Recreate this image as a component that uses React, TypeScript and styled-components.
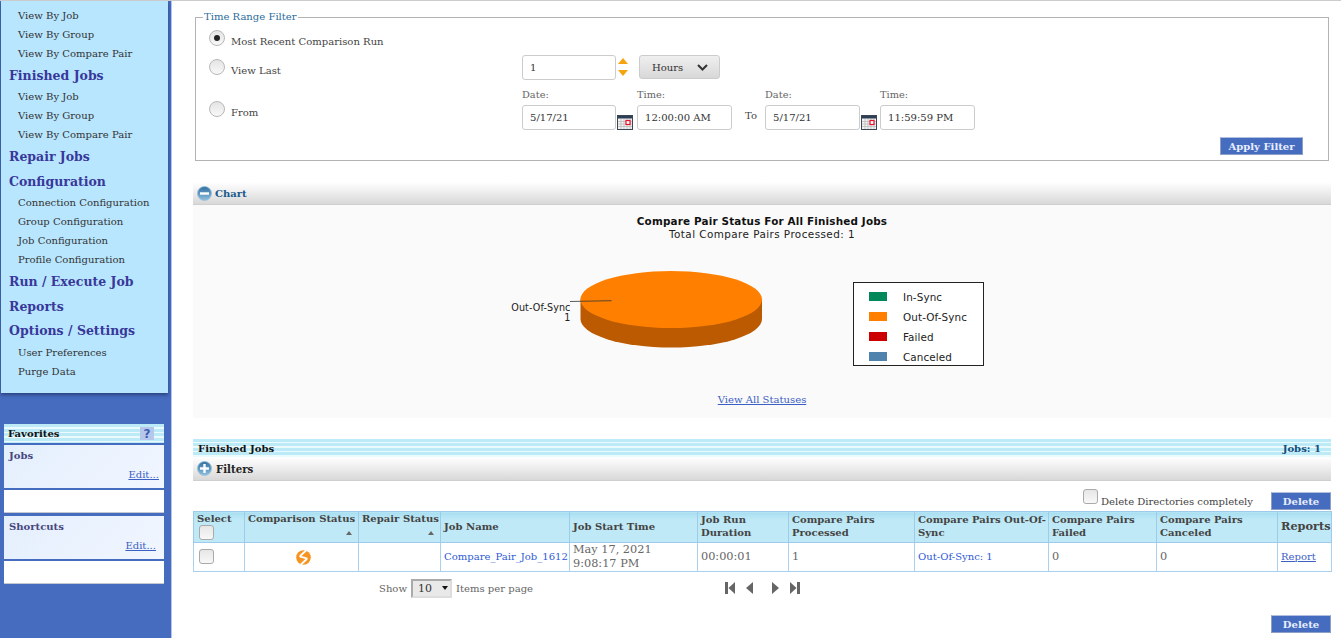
import React from 'react';
import styled, { createGlobalStyle, css } from 'styled-components';

const GlobalStyle = createGlobalStyle`
  html, body {
    margin: 0;
    padding: 0;
    background: #fff;
    overflow: hidden;
  }
  body {
    font-family: "DejaVu Serif", "Liberation Serif", serif;
    font-size: 10.05px;
    color: #444;
  }
  * {
    box-sizing: border-box;
  }
`;

const stripes = css`
  background: repeating-linear-gradient(to bottom, #bdeaf7 0, #bdeaf7 3px, #eafafd 3px, #eafafd 4.5px);
`;

const navEntries: { label: string; heading?: boolean }[] = [
  { label: 'View By Job' },
  { label: 'View By Group' },
  { label: 'View By Compare Pair' },
  { label: 'Finished Jobs', heading: true },
  { label: 'View By Job' },
  { label: 'View By Group' },
  { label: 'View By Compare Pair' },
  { label: 'Repair Jobs', heading: true },
  { label: 'Configuration', heading: true },
  { label: 'Connection Configuration' },
  { label: 'Group Configuration' },
  { label: 'Job Configuration' },
  { label: 'Profile Configuration' },
  { label: 'Run / Execute Job', heading: true },
  { label: 'Reports', heading: true },
  { label: 'Options / Settings', heading: true },
  { label: 'User Preferences' },
  { label: 'Purge Data' },
];

const columnWidths = [51, 114, 82, 129, 128, 91, 126, 134, 108, 121, 54];

const MinusPlusIcon: React.FC<{ plus?: boolean }> = ({ plus }) => (
  <svg width="15" height="15" viewBox="0 0 15 15">
    <defs>
      <linearGradient id={plus ? 'plusFill' : 'minusFill'} x1="0" y1="0" x2="0" y2="1">
        <stop offset="0" stopColor="#2f6f9f" />
        <stop offset="1" stopColor="#8fc0e0" />
      </linearGradient>
    </defs>
    <circle cx="7.5" cy="7.5" r="7" fill={`url(#${plus ? 'plusFill' : 'minusFill'})`} stroke="#9cc0d8" strokeWidth="0.8" />
    <rect x="3" y="6.3" width="9" height="2.4" fill="#fff" />
    {plus && <rect x="6.3" y="3" width="2.4" height="9" fill="#fff" />}
  </svg>
);

const CalendarIcon: React.FC = () => (
  <svg width="16" height="15" viewBox="0 0 16 15">
    <rect x="0" y="0" width="16" height="15" fill="#f2f2f2" />
    <rect x="0" y="0" width="16" height="3.5" fill="#2d3f55" />
    <path d="M0 .5H16M.5 0V15M15.5 0V15M0 14.5H16" stroke="#3b4656" strokeWidth="1" fill="none" />
    <path d="M4 4V14M7 4V14M10 4V14M13 4V14M1 6.5H15M1 9H15M1 11.5H15" stroke="#b5b5b5" strokeWidth="0.7" />
    <rect x="9" y="5.5" width="4" height="4" fill="#fff" stroke="#e8102a" strokeWidth="1.2" />
  </svg>
);

const StatusIcon: React.FC = () => (
  <svg width="15" height="15" viewBox="0 0 15 15">
    <circle cx="7.5" cy="7.5" r="7.3" fill="#f7931e" />
    <path d="M10 0.5L4.6 5.6Q3.9 6.5 5 6.9L10 8.1Q11.1 8.5 10.4 9.4L5 14.5" fill="none" stroke="#fff" strokeWidth="2" />
  </svg>
);

const PagerIcon: React.FC<{ kind: 'first' | 'prev' | 'next' | 'last' }> = ({ kind }) => {
  const shapes = {
    first: <path d="M0 1H3V13H0ZM10 1V13L3.5 7Z" />,
    prev: <path d="M7 1V13L0 7Z" />,
    next: <path d="M0 1V13L7 7Z" />,
    last: <path d="M7 1H10V13H7ZM0 1V13L6.5 7Z" />,
  };
  const wide = kind === 'first' || kind === 'last';
  return (
    <svg width={wide ? 10 : 7} height="14" viewBox={`0 0 ${wide ? 10 : 7} 14`} fill="#666">
      {shapes[kind]}
    </svg>
  );
};

const PieChart: React.FC = () => (
  <ChartSvg viewBox="442 212 640 170">
    <g fontFamily="'DejaVu Sans', sans-serif" fontSize="10.4" fill="#222" letterSpacing="0.1">
      <text x="762" y="225" textAnchor="middle" fontWeight="bold" fontSize="10.4" letterSpacing="0.17" fill="#111">
        Compare Pair Status For All Finished Jobs
      </text>
      <text x="762" y="238" textAnchor="middle" letterSpacing="0.44">Total Compare Pairs Processed: 1</text>
      <path d="M580.5 299.5V319A90.7 28.5 0 0 0 762 319V299.5Z" fill="#bb5a00" />
      <ellipse cx="671.2" cy="299.5" rx="90.8" ry="28.5" fill="#ff8000" />
      <path d="M570 301.5L611.5 300.7" stroke="#333" strokeWidth="0.8" fill="none" />
      <text x="570.5" y="311" textAnchor="end" fontSize="9.6">Out-Of-Sync</text>
      <text x="570.5" y="321" textAnchor="end" fontSize="9.6">1</text>
      <rect x="853.5" y="282.5" width="130" height="83" fill="#fff" stroke="#222" />
      <rect x="869" y="292" width="18" height="9" fill="#00875a" />
      <rect x="869" y="312" width="18" height="9" fill="#ff8000" />
      <rect x="869" y="332" width="18" height="9" fill="#cc0000" />
      <rect x="869" y="352" width="18" height="9" fill="#4f82ad" />
      <text x="903" y="301">In-Sync</text>
      <text x="903" y="321">Out-Of-Sync</text>
      <text x="903" y="341">Failed</text>
      <text x="903" y="361">Canceled</text>
    </g>
  </ChartSvg>
);

const App: React.FC = () => (
  <>
    <GlobalStyle />
    <Page>
      <Sidebar>
        <NavPanel>
          {navEntries.map((entry, i) =>
            entry.heading ? <NavHeading key={i}>{entry.label}</NavHeading> : <NavItem key={i}>{entry.label}</NavItem>,
          )}
        </NavPanel>
        <FavHeader>
          <span>Favorites</span>
          <HelpBadge>?</HelpBadge>
        </FavHeader>
        <FavBox>
          <FavTitle>Jobs</FavTitle>
          <FavEdit $inset={5}>Edit...</FavEdit>
        </FavBox>
        <FavBlank />
        <FavBox $top={3}>
          <FavTitle>Shortcuts</FavTitle>
          <FavEdit $inset={8}>Edit...</FavEdit>
        </FavBox>
        <FavBlank />
      </Sidebar>

      <Main>
        <FilterSet>
          <FilterLegend>Time Range Filter</FilterLegend>
          <FilterRowOne>
            <RadioLabel>
              <Radio $checked />
              <RadioText>Most Recent Comparison Run</RadioText>
            </RadioLabel>
          </FilterRowOne>
          <FilterRowTwo>
            <RadioCell $nudge={0}>
              <RadioLabel>
                <Radio />
                <RadioText>View Last</RadioText>
              </RadioLabel>
            </RadioCell>
            <TextBox $width={94}>1</TextBox>
            <Spinner>
              <SpinUp />
              <SpinDown />
            </Spinner>
            <SelectButton>
              Hours
              <svg width="11" height="7" viewBox="0 0 11 7">
                <path d="M1 1L5.5 5.5L10 1" fill="none" stroke="#333" strokeWidth="2" />
              </svg>
            </SelectButton>
          </FilterRowTwo>
          <FilterRowThree>
            <RadioCell $nudge={2}>
              <RadioLabel>
                <Radio />
                <RadioText>From</RadioText>
              </RadioLabel>
            </RadioCell>
            <DateField $width={115}>
              <FieldCaption>Date:</FieldCaption>
              <FieldInner>
                <TextBox $width={94}>5/17/21</TextBox>
                <CalendarIcon />
              </FieldInner>
            </DateField>
            <DateField $width={108}>
              <FieldCaption>Time:</FieldCaption>
              <TextBox $width={95}>12:00:00 AM</TextBox>
            </DateField>
            <ToLabel>To</ToLabel>
            <DateField $width={115}>
              <FieldCaption>Date:</FieldCaption>
              <FieldInner>
                <TextBox $width={95}>5/17/21</TextBox>
                <CalendarIcon />
              </FieldInner>
            </DateField>
            <DateField $width={95}>
              <FieldCaption>Time:</FieldCaption>
              <TextBox $width={95}>11:59:59 PM</TextBox>
            </DateField>
          </FilterRowThree>
          <ApplyRow>
            <BlueButton $width={83}>Apply Filter</BlueButton>
          </ApplyRow>
        </FilterSet>

        <ChartPanel>
          <ToggleBar $height={23}>
            <MinusPlusIcon />
            <ChartToggleText>Chart</ChartToggleText>
          </ToggleBar>
          <ChartBody>
            <PieChart />
            <StatusLink>View All Statuses</StatusLink>
          </ChartBody>
        </ChartPanel>

        <StripeBar>
          <span>Finished Jobs</span>
          <JobCount>Jobs: 1</JobCount>
        </StripeBar>
        <ToggleBar $height={24}>
          <MinusPlusIcon plus />
          <FilterToggleText>Filters</FilterToggleText>
        </ToggleBar>

        <DeleteRow>
          <DeleteCheck />
          <DeleteLabel>Delete Directories completely</DeleteLabel>
          <BlueButton $width={60}>Delete</BlueButton>
        </DeleteRow>

        <JobsTable>
          <colgroup>
            {columnWidths.map((width, i) => (
              <col key={i} style={{ width }} />
            ))}
          </colgroup>
          <thead>
            <tr>
              <HeadCell $align="top">
                Select
                <RowCheck />
              </HeadCell>
              <HeadCell $align="top">
                Comparison Status
                <SortMark />
              </HeadCell>
              <HeadCell $align="top">
                Repair Status
                <SortMark />
              </HeadCell>
              <HeadCell>Job Name</HeadCell>
              <HeadCell>Job Start Time</HeadCell>
              <HeadCell>Job Run Duration</HeadCell>
              <HeadCell>Compare Pairs Processed</HeadCell>
              <HeadCell>Compare Pairs Out-Of-Sync</HeadCell>
              <HeadCell>Compare Pairs Failed</HeadCell>
              <HeadCell>Compare Pairs Canceled</HeadCell>
              <ReportsHead>Reports</ReportsHead>
            </tr>
          </thead>
          <tbody>
            <tr>
              <BodyCell>
                <RowCheck />
              </BodyCell>
              <IconCell>
                <StatusIcon />
              </IconCell>
              <BodyCell />
              <BodyCell>
                <PlainLink>Compare_Pair_Job_1612</PlainLink>
              </BodyCell>
              <DataCell>
                May 17, 2021
                <br />
                9:08:17 PM
              </DataCell>
              <DataCell>00:00:01</DataCell>
              <DataCell>1</DataCell>
              <BodyCell>
                <PlainLink>Out-Of-Sync: 1</PlainLink>
              </BodyCell>
              <DataCell>0</DataCell>
              <DataCell>0</DataCell>
              <BodyCell>
                <ReportLink>Report</ReportLink>
              </BodyCell>
            </tr>
          </tbody>
        </JobsTable>

        <PagerRow>
          <PageSize>
            Show
            <SizeSelect>
              10
              <SizeArrow />
            </SizeSelect>
            Items per page
          </PageSize>
          <Pager>
            <PagerGroup>
              <PagerIcon kind="first" />
              <PagerIcon kind="prev" />
            </PagerGroup>
            <PagerGroup>
              <PagerIcon kind="next" />
              <PagerIcon kind="last" />
            </PagerGroup>
          </Pager>
        </PagerRow>

        <BottomRow>
          <BlueButton $width={60}>Delete</BlueButton>
        </BottomRow>
      </Main>
    </Page>
  </>
);

const Page = styled.div`
  display: flex;
  width: 1341px;
  height: 638px;
  overflow: hidden;
  border-top: 1px solid #ccc;
`;

const Sidebar = styled.aside`
  flex: 0 0 172px;
  height: 637px;
  background: #466cbf;
  border-right: 1px solid #b4c4ea;
`;

const NavPanel = styled.nav`
  width: 167px;
  height: 392px;
  padding-top: 5.7px;
  margin-left: 1px;
  background: #b8e6ff;
  box-shadow: 0 2px 3px rgba(20, 30, 70, 0.5);
`;

const NavItem = styled.div`
  height: 19px;
  line-height: 18px;
  padding-left: 17px;
  font-size: 10.05px;
  color: #333;
`;

const NavHeading = styled.div`
  height: 24.5px;
  line-height: 24px;
  padding-left: 8px;
  font-size: 12.5px;
  font-weight: bold;
  color: #38389a;
`;

const FavHeader = styled.div`
  ${stripes};
  display: flex;
  justify-content: space-between;
  align-items: center;
  width: 160px;
  height: 19px;
  margin: 31px 0 2px 4px;
  padding: 0 10px 0 4px;
  font-size: 10.05px;
  font-weight: bold;
  color: #111;
`;

const HelpBadge = styled.span`
  display: flex;
  justify-content: center;
  align-items: center;
  width: 14px;
  height: 13px;
  background: #b7c7ec;
  color: #3c5eb0;
  font-family: "DejaVu Sans", sans-serif;
  font-size: 12px;
  font-weight: bold;
`;

const FavBox = styled.div<{ $top?: number }>`
  width: 160px;
  height: 43px;
  margin: ${({ $top }) => $top ?? 0}px 0 2px 4px;
  padding: 5px 5px 0;
  background: linear-gradient(135deg, #e4effd, #f1f6ff);
`;

const FavTitle = styled.div`
  font-size: 10.05px;
  font-weight: bold;
  color: #47477f;
`;

const FavEdit = styled.a<{ $inset: number }>`
  display: block;
  margin: 8px ${({ $inset }) => $inset - 5}px 0 0;
  text-align: right;
  font-size: 10.05px;
  color: #3b60c4;
  text-decoration: underline;
`;

const FavBlank = styled.div`
  width: 160px;
  height: 23px;
  margin-left: 4px;
  background: #fff;
  border-bottom: 1px solid #c4c8d0;
`;

const Main = styled.main`
  flex: 1;
  min-width: 0;
  padding: 9px 10px 0 21px;
`;

const FilterSet = styled.fieldset`
  width: 1134px;
  height: 151px;
  margin: 0 0 0 2px;
  padding: 0 0 0 13px;
  border: 1px solid #b3b3b3;
`;

const FilterLegend = styled.legend`
  margin-left: -6px;
  padding: 0 1px;
  font-size: 10.05px;
  line-height: 14px;
  color: #2b6d9c;
`;

const FilterRowOne = styled.div`
  display: flex;
  height: 21px;
  margin-top: 6px;
`;

const FilterRowTwo = styled.div`
  display: flex;
  align-items: center;
  height: 24px;
  margin-top: 4px;
`;

const FilterRowThree = styled.div`
  display: flex;
  align-items: flex-start;
  height: 41px;
  margin-top: 9px;
`;

const RadioCell = styled.div<{ $nudge: number }>`
  display: flex;
  flex: 0 0 313px;
  align-self: center;
  padding-top: ${({ $nudge }) => $nudge}px;
`;

const RadioLabel = styled.label`
  display: flex;
  align-items: flex-start;
`;

const Radio = styled.span<{ $checked?: boolean }>`
  display: flex;
  justify-content: center;
  align-items: center;
  width: 16px;
  height: 16px;
  border: 1px solid #b8b8b8;
  border-radius: 50%;
  background: linear-gradient(#e4e4e4, #f8f8f8);
  &::after {
    content: '';
    display: ${({ $checked }) => ($checked ? 'block' : 'none')};
    width: 6px;
    height: 6px;
    border-radius: 50%;
    background: #222;
  }
`;

const RadioText = styled.span`
  margin: 6px 0 0 6px;
  font-size: 10.05px;
  color: #444;
`;

const TextBox = styled.div<{ $width: number }>`
  display: flex;
  align-items: center;
  flex: 0 0 ${({ $width }) => $width}px;
  width: ${({ $width }) => $width}px;
  height: 25px;
  padding-left: 7px;
  border: 1px solid #ccc;
  border-radius: 3px;
  background: #fff;
  font-size: 10.05px;
  color: #333;
`;

const Spinner = styled.div`
  display: flex;
  flex: 0 0 23px;
  flex-direction: column;
  align-items: flex-start;
  gap: 6px;
  padding-left: 2px;
`;

const SpinUp = styled.span`
  width: 0;
  height: 0;
  border-left: 5.5px solid transparent;
  border-right: 5.5px solid transparent;
  border-bottom: 6px solid #f5a30f;
`;

const SpinDown = styled(SpinUp)`
  border-bottom: 0;
  border-top: 6px solid #f5a30f;
`;

const SelectButton = styled.div`
  display: flex;
  justify-content: space-between;
  align-items: center;
  width: 81px;
  height: 24px;
  padding: 0 11px 0 12px;
  border: 1px solid #ccc;
  border-radius: 3px;
  background: linear-gradient(#efefef, #d8d8d8);
  font-size: 10.05px;
  color: #333;
`;

const DateField = styled.div<{ $width: number }>`
  flex: 0 0 ${({ $width }) => $width}px;
`;

const FieldCaption = styled.div`
  height: 17px;
  line-height: 14px;
  font-size: 9.8px;
  color: #666;
`;

const FieldInner = styled.div`
  display: flex;
  align-items: flex-end;
  gap: 1px;
`;

const ToLabel = styled.span`
  flex: 0 0 20px;
  margin-top: 22px;
  font-size: 10.05px;
  color: #444;
`;

const ApplyRow = styled.div`
  display: flex;
  justify-content: flex-end;
  margin: 8px 25px 0 0;
`;

const BlueButton = styled.div<{ $width: number }>`
  display: flex;
  justify-content: center;
  align-items: center;
  width: ${({ $width }) => $width}px;
  height: 18px;
  background: #466cbf;
  border: 1px solid #8d9fc4;
  border-top-color: #b3c0dd;
  font-size: 10.05px;
  font-weight: bold;
  color: #e8eeff;
`;

const ChartPanel = styled.section`
  margin-top: 21px;
`;

const ToggleBar = styled.div<{ $height: number }>`
  display: flex;
  align-items: center;
  gap: 3px;
  height: ${({ $height }) => $height}px;
  padding-left: 4px;
  background: linear-gradient(#fff 0, #f2f2f2 35%, #d8d8d8 100%);
  border-bottom: 1px solid #cfcfcf;
`;

const ChartToggleText = styled.span`
  font-size: 10.05px;
  font-weight: bold;
  color: #1b5a8c;
`;

const FilterToggleText = styled.span`
  margin-left: 1px;
  font-size: 10.2px;
  font-weight: bold;
  color: #222;
`;

const ChartBody = styled.div`
  display: flex;
  flex-direction: column;
  align-items: center;
  height: 213px;
  padding-top: 7px;
  background: #fafafa;
`;

const ChartSvg = styled.svg`
  display: block;
  width: 640px;
  height: 170px;
`;

const StatusLink = styled.a`
  margin-top: 12px;
  font-size: 10.05px;
  color: #3b60c4;
  text-decoration: underline;
`;

const StripeBar = styled.div`
  ${stripes};
  display: flex;
  justify-content: space-between;
  align-items: center;
  height: 18px;
  margin-top: 21px;
  padding: 0 10px 0 5px;
  font-size: 10.05px;
  font-weight: bold;
  color: #111;
`;

const JobCount = styled.span`
  color: #144f7d;
`;

const DeleteRow = styled.div`
  display: flex;
  justify-content: flex-end;
  align-items: flex-end;
  height: 22px;
  margin-top: 7px;
`;

const DeleteLabel = styled.span`
  margin: 0 18px 3px 3px;
  font-size: 10.05px;
  color: #444;
`;

const DeleteCheck = styled.span`
  display: block;
  width: 15px;
  height: 15px;
  margin-bottom: 6px;
  border: 1px solid #aaa;
  border-radius: 3px;
  background: linear-gradient(#e6e6e6, #f8f8f8);
`;

const RowCheck = styled.span`
  display: block;
  width: 15px;
  height: 15px;
  margin: 0 0 0 2px;
  border: 1px solid #aaa;
  border-radius: 3px;
  background: linear-gradient(#e6e6e6, #f8f8f8);
`;

const JobsTable = styled.table`
  width: 1138px;
  margin-top: 1px;
  border-collapse: collapse;
  table-layout: fixed;
  border: 1px solid #b5d7ee;
`;

const HeadCell = styled.th<{ $align?: 'top' }>`
  height: 31px;
  padding: ${({ $align }) => ($align ? '0 0 0 3px' : '0 0 2px 3px')};
  vertical-align: ${({ $align }) => ($align ? 'top' : 'middle')};
  text-align: left;
  line-height: 13px;
  font-size: 10.05px;
  font-weight: bold;
  color: #444;
  background: linear-gradient(#a8dff2 0, #bfe9f6 25%, #bfe9f6 100%);
  border: 1px solid #9fcbea;
`;

const ReportsHead = styled(HeadCell)`
  padding: 0 0 2px 3px;
  font-size: 11.3px;
`;

const SortMark = styled.span`
  display: block;
  width: 0;
  height: 0;
  margin: 6px 6px 0 auto;
  border-left: 3.5px solid transparent;
  border-right: 3.5px solid transparent;
  border-bottom: 4px solid #666;
`;

const BodyCell = styled.td`
  height: 29px;
  padding: 0 3px 2px;
  font-size: 10.05px;
  color: #555;
  background: #fff;
  border: 1px solid #a9d0ee;
`;

const IconCell = styled(BodyCell)`
  padding: 0 3px 0 7px;
  text-align: center;
  line-height: 0;
`;

const DataCell = styled(BodyCell)`
  padding: 0 3px;
  font-size: 11.3px;
  line-height: 14px;
  color: #666;
`;

const PlainLink = styled.a`
  font-size: 10.05px;
  color: #2e5bd6;
  white-space: nowrap;
`;

const ReportLink = styled.a`
  font-size: 10.05px;
  color: #3b60c4;
  text-decoration: underline;
`;

const PagerRow = styled.div`
  display: flex;
  align-items: center;
  height: 24px;
  margin-top: 4px;
`;

const PageSize = styled.div`
  display: flex;
  flex: 0 0 532px;
  align-items: center;
  gap: 4px;
  padding-left: 186px;
  font-size: 10.05px;
  color: #666;
`;

const SizeSelect = styled.div`
  display: flex;
  justify-content: space-between;
  align-items: center;
  width: 41px;
  height: 19px;
  padding: 0 2px 0 5px;
  background: #e9e9e9;
  border: 2px solid;
  border-color: #aaa #ddd #ddd #aaa;
  font-size: 11px;
  color: #333;
`;

const SizeArrow = styled.span`
  width: 0;
  height: 0;
  border-left: 3px solid transparent;
  border-right: 3px solid transparent;
  border-top: 4px solid #111;
`;

const Pager = styled.div`
  display: flex;
  align-items: center;
  gap: 19px;
`;

const PagerGroup = styled.div`
  display: flex;
  align-items: center;
  gap: 11px;
`;

const BottomRow = styled.div`
  display: flex;
  justify-content: flex-end;
  margin-top: 15px;
`;

export default App;
